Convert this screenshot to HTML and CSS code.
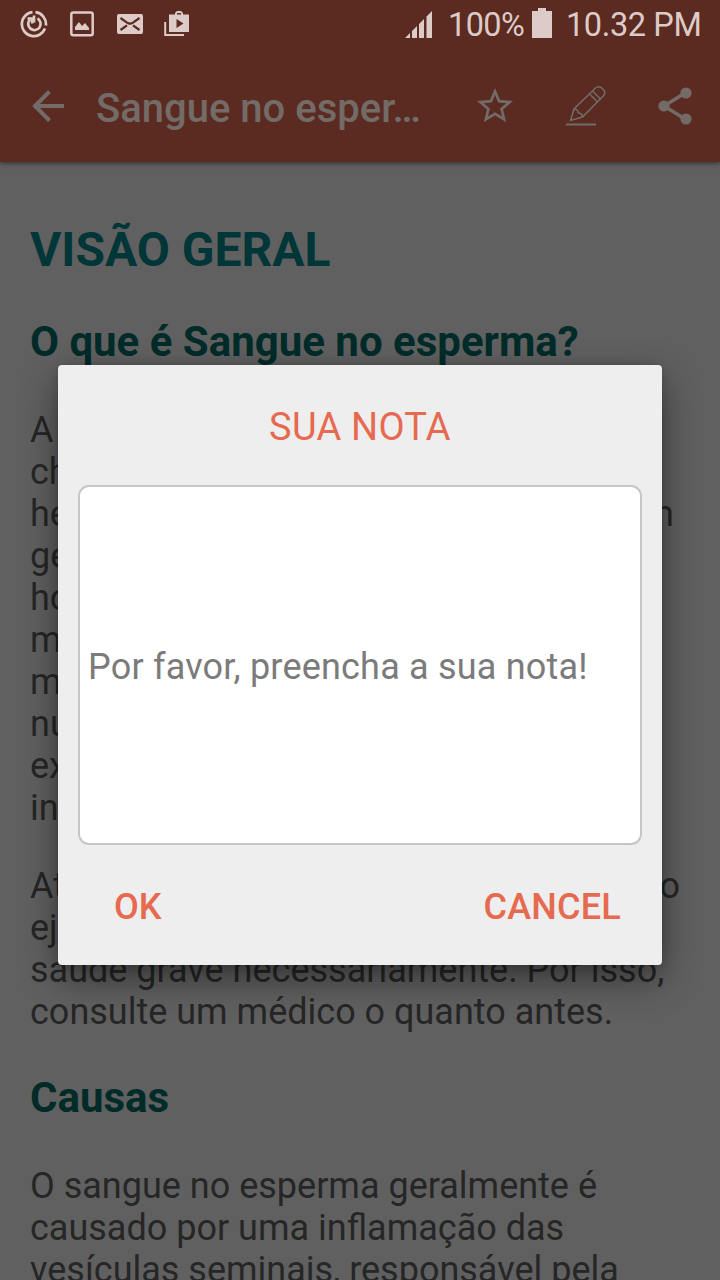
FILE: index.html
```html
<!DOCTYPE html>
<html lang="pt">
<head>
<meta charset="utf-8">
<title>Sangue no esperma</title>
<link rel="stylesheet" href="styles.css">
</head>
<body>
<div class="screen">
  <header class="top">
    <div class="status">
      <div class="notices">
        <svg width="28" height="28" viewBox="0 0 28 28" fill="none" stroke="currentColor" stroke-width="2.7"><path d="M15.5 2.2A12 12 0 0 1 25.9 15.5M25 18.5A12 12 0 1 1 12.5 2.2"/><path d="M17.5 8.5A6.2 6.2 0 1 1 10 9.5M7.5 8.500h4.700v5M14 5.500v7"/></svg>
        <svg width="24" height="26" viewBox="0 0 24 26" fill="none" stroke="currentColor" stroke-width="2.5"><rect x="1.3" y="1.5" width="21.4" height="22.800" rx="2"/><path d="M5 19v-3l4-5 3 4 3-3 4 5v2z" fill="currentColor" stroke="none"/></svg>
        <svg width="26" height="20" viewBox="0 0 26 20"><rect width="26" height="20" rx="2" fill="currentColor"/><path d="M3.500 4 10 8.700q3 2 6 0L22.500 4M3.500 16 10 11.300M22.500 16 16 11.300" fill="none" stroke="#5a2a22" stroke-width="2.2"/></svg>
        <svg width="26" height="26" viewBox="0 0 26 26"><path fill="currentColor" fill-rule="evenodd" d="M11 3.500V2l2-2h4l2 2v1.500h6v17.500H5V3.500zM13 3.500h4V2h-4zM12.500 8v9l7-4.500z"/><path d="M1.200 11v13H20" fill="none" stroke="currentColor" stroke-width="2"/></svg>
      </div>
      <div class="system">
        <svg class="signal" width="28" height="28" viewBox="0 0 28 28" fill="currentColor"><path d="M0 28 5 23v5zM7 21l5-5v12H7zM14 14l5-5v19h-5zM21.500 6.500 27 1v27h-5.500z"/></svg>
        <span class="percent">100%</span>
        <svg class="battery" width="20" height="30" viewBox="0 0 20 30" fill="currentColor"><path d="M6 0h8v3h6v27H0V3h6z"/></svg>
        <span class="clock">10.32 PM</span>
      </div>
    </div>
    <div class="toolbar">
      <svg class="back" width="32" height="32" viewBox="0 0 32 32" fill="none" stroke="currentColor" stroke-width="4"><path d="M17.500 1.500 3 16l14.500 14.500M3 16h29"/></svg>
      <div class="title">Sangue no esper…</div>
      <svg class="star" width="36" height="34" viewBox="0 0 36 34" fill="none" stroke="currentColor" stroke-width="2.700"><path d="M18 3.500 22.100 13.200l10.600.9-8.100 7 2.500 10.300-9.100-5.500-9.100 5.500 2.500-10.300-8.100-7 10.600-.9z"/></svg>
      <svg class="pencil" width="40" height="42" viewBox="0 0 40 42" fill="none" stroke="currentColor" stroke-width="1.500"><path d="M4.500 35.500 8 24 29.500 3q3.500-3 7.200.8t.8 7L16.500 32zM8 24q3.500 0 4.500 4 3.500 0 4 4M23.500 9l8 8M26.500 6l8 8"/><path d="M0 39.500h30" stroke-width="2"/></svg>
      <svg class="share" width="34" height="38" viewBox="0 0 34 38"><path d="M27 6 6 19l21 13" fill="none" stroke="currentColor" stroke-width="3.500"/><g fill="currentColor"><circle cx="28" cy="6" r="5.600"/><circle cx="6" cy="19" r="5.600"/><circle cx="28" cy="32" r="5.600"/></g></svg>
    </div>
  </header>
  <main class="article">
    <h1>VISÃO GERAL</h1>
    <h2>O que é Sangue no esperma?</h2>
    <div class="para">
      <div class="line">A</div>
      <div class="line">ch</div>
      <div class="line line-n"><span>he</span><span>n</span></div>
      <div class="line">ge</div>
      <div class="line">ho</div>
      <div class="line">m</div>
      <div class="line">m</div>
      <div class="line">nu</div>
      <div class="line">ex</div>
      <div class="line">in</div>
    </div>
    <div class="para">
      <div class="line line-o"><span>At</span><span>o</span></div>
      <div class="line">ej</div>
      <div class="line">saúde grave necessariamente. Por isso,</div>
      <div class="line">consulte um médico o quanto antes.</div>
    </div>
    <h2>Causas</h2>
    <div class="para">
      <div class="line">O sangue no esperma geralmente é</div>
      <div class="line">causado por uma inflamação das</div>
      <div class="line">vesículas seminais, responsável pela</div>
    </div>
  </main>
  <section class="dialog" role="dialog">
    <div class="dialog-title">SUA NOTA</div>
    <div class="note">Por favor, preencha a sua nota!</div>
    <div class="actions"><span>OK</span><span class="cancel">CANCEL</span></div>
  </section>
</div>
</body>
</html>
```
FILE: styles.css
```css
* { box-sizing: border-box; }
body { margin: 0; font-family: Roboto, "Liberation Sans", sans-serif; }
svg { display: block; flex: none; }
.screen { position: relative; width: 720px; height: 1280px; overflow: hidden; background: #606060; }
.top { height: 162px; background: #5b2b22; box-shadow: 0 1px 5px rgba(0, 0, 0, .55); }
.status { display: flex; justify-content: space-between; height: 50px; padding: 0 19px 0 20px; color: #ddcbc8; }
.notices { display: flex; align-items: center; gap: 22px; height: 48px; }
.notices svg:nth-child(3) { margin-left: 1px; }
.notices svg:nth-child(4) { margin-left: -1px; }
.system { display: flex; align-items: center; height: 50px; font-size: 32.5px; line-height: 50px; white-space: nowrap; }
.signal { margin: -3px 16px 0 0; }
.percent { width: 78px; margin-left: -1px; letter-spacing: -.6px; }
.battery { margin: -4px 14px 0 6px; }
.clock { width: 135px; letter-spacing: -.4px; }
.toolbar { display: flex; align-items: center; height: 112px; padding: 0 28px 0 32px; color: #736b67; }
.title { flex: 1; margin: 6px 0 0 32px; font-size: 40px; font-weight: 500; line-height: 48px; white-space: nowrap; }
.star { margin-top: -2px; }
.pencil { margin-left: 53px; }
.share { margin-left: 52px; }
.article { padding: 60px 30px 0; color: #262626; }
h1, h2 { margin: 0; font-weight: 700; white-space: nowrap; }
h1 { font-size: 48px; line-height: 56px; color: #003638; }
h2 { margin: 39px 0 43px; font-size: 42px; line-height: 49px; color: #002b29; }
.para + h2 { margin: 40px 0 43px; }
.para { font-size: 36px; line-height: 42px; white-space: nowrap; }
.para + .para { margin-top: 36px; }
.line { display: flex; justify-content: space-between; height: 42px; }
.line-n { width: 644px; }
.line-o { width: 650px; }
.dialog { position: absolute; left: 58px; top: 365px; width: 604px; height: 600px; padding: 38px 20px 0; border-radius: 4px; background: #eee; color: #e66a50; box-shadow: 0 14px 36px rgba(0, 0, 0, .45), 0 0 10px rgba(0, 0, 0, .15); }
.dialog-title { height: 82px; font-size: 38px; letter-spacing: .25px; line-height: 49px; text-align: center; }
.note { display: flex; align-items: center; height: 360px; padding: 4px 8px 0; border: 2px solid #c6c6c6; border-radius: 11px; background: #fff; color: #7b7b7b; font-size: 36px; letter-spacing: .2px; white-space: nowrap; }
.actions { display: flex; justify-content: space-between; padding: 40px 21px 0 36px; font-size: 36px; font-weight: 500; line-height: 44px; }
.cancel { letter-spacing: .2px; }
```
